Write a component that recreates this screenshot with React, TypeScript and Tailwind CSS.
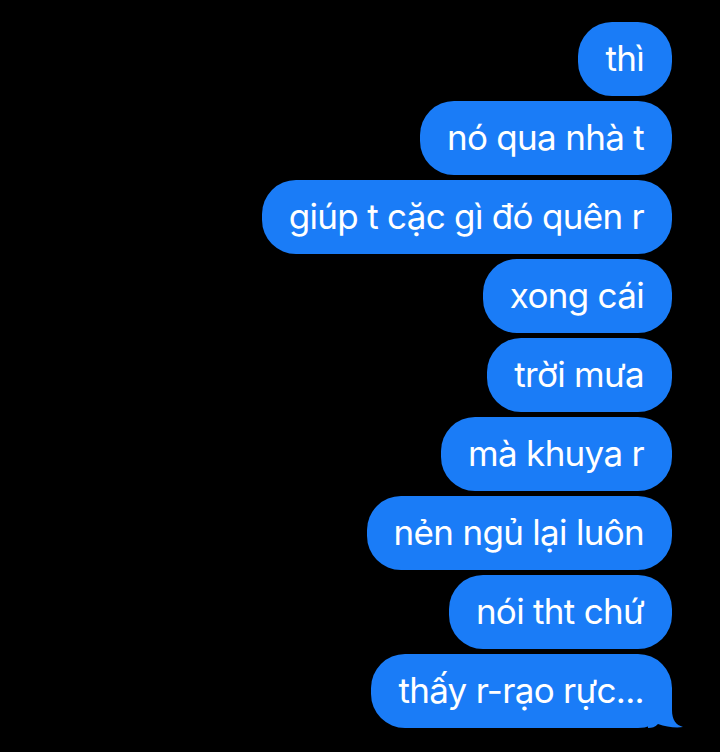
import React from "react";

const msgs = [
  "thì",
  "nó qua nhà t",
  "giúp t cặc gì đó quên r",
  "xong cái",
  "trời mưa",
  "mà khuya r",
  "nẻn ngủ lại luôn",
  "nói tht chứ",
  "thấy r-rạo rực...",
];

export default function App() {
  return (
    <div
      className="w-[720px] h-[752px] bg-black overflow-hidden flex flex-col items-end pt-[22px] pr-[48px] gap-[5px]"
      style={{ fontFamily: "Inter, 'Noto Sans', sans-serif" }}
    >
      {msgs.map((m, i) => (
        <div
          key={i}
          className="relative bg-[#1a7cf7] text-white rounded-[34px] h-[74px] flex items-center pl-[27px] pr-[28px] text-[35px] leading-[44px] tracking-[-0.7px]"
        >
          <span className="relative top-[-1px]">{m}</span>
          {i === msgs.length - 1 && (
            <svg
              className="absolute right-[-12px] bottom-0"
              width="36"
              height="34"
              viewBox="0 0 36 34"
            >
              <path
                d="M0 0 L24 0 L24 16 C24 26 28 31 35 33 C28 34 18 33 10 30 C7 33 4 34 0 34 Z"
                fill="#1a7cf7"
              />
            </svg>
          )}
        </div>
      ))}
    </div>
  );
}
